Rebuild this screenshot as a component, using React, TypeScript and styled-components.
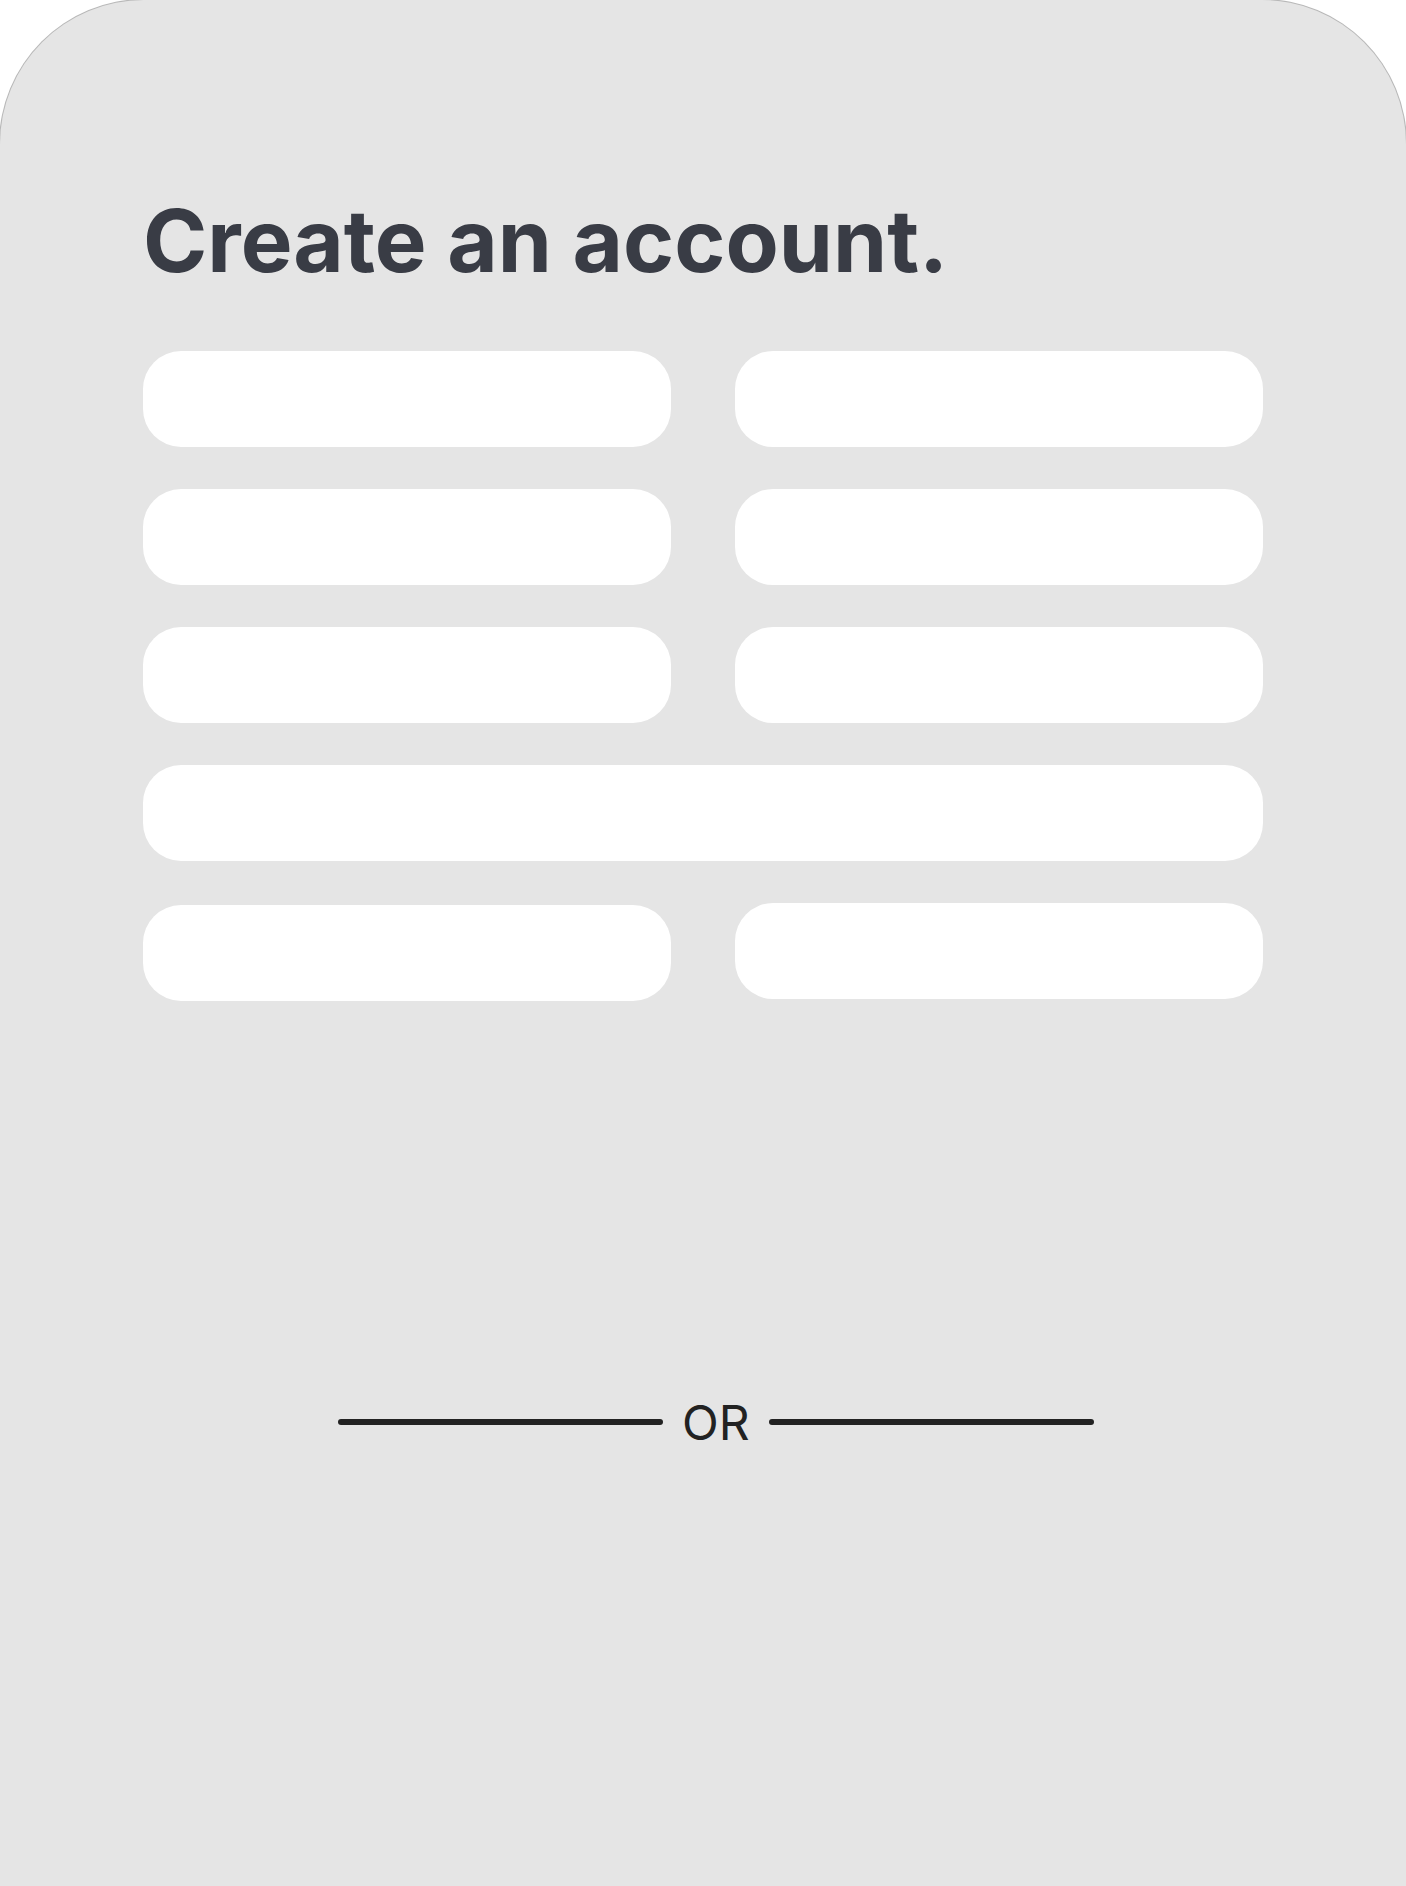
import styled, { createGlobalStyle } from 'styled-components';

const GlobalStyle = createGlobalStyle`
  html, body {
    margin: 0;
    padding: 0;
    background: #ffffff;
  }

  * {
    box-sizing: border-box;
  }
`;

const Card = styled.main`
  width: 1406px;
  min-height: 1886px;
  padding: 197px 143px 0;
  background: #e5e5e5;
  border-radius: 144px 144px 0 0;
  box-shadow: 0 0 0 1px #b8b8b8;
  font-family: Inter, "Noto Sans", sans-serif;
`;

const Title = styled.h1`
  margin: 0;
  font-size: 87px;
  line-height: 1;
  font-weight: 700;
  letter-spacing: 0;
  color: #393c45;
`;

const Form = styled.form`
  display: grid;
  grid-template-columns: 1fr 1fr;
  column-gap: 64px;
  row-gap: 42px;
  margin-top: 67px;
  align-items: start;
`;

const Field = styled.input<{ $wide?: boolean; $shift?: number }>`
  display: block;
  width: 100%;
  height: 96px;
  margin: ${(p) => (p.$shift ? `${p.$shift}px` : '0')} 0 0;
  padding: 0 38px;
  border: none;
  border-radius: 38px;
  background: #ffffff;
  outline: none;
  appearance: none;
  font: inherit;
  font-size: 24px;
  color: #222;
  grid-column: ${(p) => (p.$wide ? '1 / -1' : 'auto')};
`;

const Divider = styled.div`
  display: flex;
  align-items: center;
  gap: 19px;
  margin: 398px 0 0 195px;
`;

const Rule = styled.span`
  display: block;
  width: 325px;
  height: 6px;
  margin-top: -3px;
  border-radius: 3px;
  background: #222222;
`;

const OrLabel = styled.span`
  font-size: 48px;
  line-height: 1;
  font-weight: 400;
  color: #222222;
`;

const App = () => {
  return (
    <>
      <GlobalStyle />
      <Card>
        <Title>Create an account.</Title>
        <Form onSubmit={(e) => e.preventDefault()}>
          <Field type="text" aria-label="First name" />
          <Field type="text" aria-label="Last name" />
          <Field type="text" aria-label="Username" />
          <Field type="email" aria-label="Email" />
          <Field type="tel" aria-label="Phone" />
          <Field type="text" aria-label="Birthday" />
          <Field type="text" aria-label="Address" $wide />
          <Field type="password" aria-label="Password" $shift={2} />
          <Field type="password" aria-label="Confirm password" />
        </Form>
        <Divider>
          <Rule />
          <OrLabel>OR</OrLabel>
          <Rule />
        </Divider>
      </Card>
    </>
  );
};

export default App;
